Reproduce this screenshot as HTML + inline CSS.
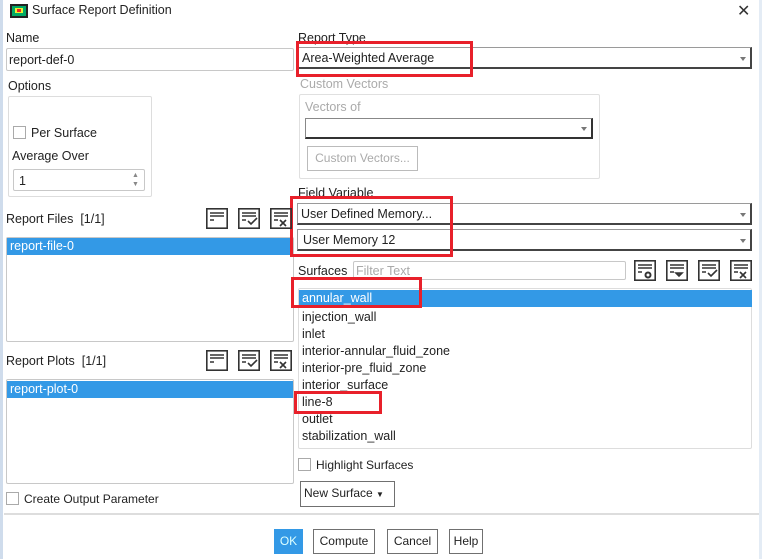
<!DOCTYPE html>
<html><head><meta charset="utf-8"><style>
*{box-sizing:border-box;margin:0;padding:0}
body{width:762px;height:559px;background:#fff;position:relative;overflow:hidden;font-family:"Liberation Sans",sans-serif;font-size:12.5px;color:#222}
.a{position:absolute;white-space:nowrap}
.inp{position:absolute;border:1px solid #c8c8c8;background:#fff;border-radius:2px}
.dd{position:absolute;border:1px solid #9a9a9a;border-right:2px solid #444;border-bottom:2px solid #444;background:#fff}
.dd:after{content:"";position:absolute;right:4px;top:50%;border:3px solid transparent;border-top:4px solid #777;margin-top:-1px}
.red{position:absolute;border:3px solid #e8202a}
.cb{position:absolute;width:13px;height:13px;border:1px solid #aaa;background:#fff}
.sel{position:absolute;background:#3399e6;color:#fff;padding-left:3px;line-height:17px}
.btn{position:absolute;border:1px solid #707070;background:#fff;text-align:center;line-height:22px;font-size:12px}
.g{color:#aaa}
</style></head><body>
<div class="a" style="left:0;top:0;width:3px;height:559px;background:#cfdcec"></div>
<div class="a" style="left:759px;top:0;width:3px;height:559px;background:#e4ecf5"></div>
<svg class="a" style="left:10px;top:4px" width="18" height="14"><rect width="18" height="14" fill="#222"/><rect x="2" y="2" width="14" height="10" fill="#0a6"/><rect x="5" y="4" width="8" height="5" fill="#ee3"/><rect x="7" y="5" width="4" height="3" fill="#e22"/></svg>
<div class="a" style="left:32px;top:3px;font-size:12.5px">Surface Report Definition</div>
<div class="a" style="left:737px;top:1px;font-size:16px;color:#333">✕</div>

<div class="a" style="left:6px;top:31px">Name</div>
<div class="inp" style="left:6px;top:48px;width:288px;height:23px"><span class="a" style="left:2px;top:4px">report-def-0</span></div>
<div class="a" style="left:8px;top:79px">Options</div>
<div class="inp" style="left:8px;top:96px;width:144px;height:101px;border-color:#ddd"></div>
<div class="cb" style="left:13px;top:126px"></div>
<div class="a" style="left:31px;top:126px">Per Surface</div>
<div class="a" style="left:12px;top:149px">Average Over</div>
<div class="inp" style="left:13px;top:169px;width:132px;height:22px"><span class="a" style="left:5px;top:4px">1</span><span class="a" style="left:118px;top:1px;font-size:7px;color:#888;line-height:9px">▲<br>▼</span></div>

<div class="a" style="left:6px;top:212px">Report Files &nbsp;[1/1]</div>
<div class="inp" style="left:6px;top:237px;width:288px;height:105px"></div>
<div class="sel" style="left:7px;top:238px;width:286px">report-file-0</div>
<div class="a" style="left:6px;top:354px">Report Plots &nbsp;[1/1]</div>
<div class="inp" style="left:6px;top:379px;width:288px;height:105px"></div>
<div class="sel" style="left:7px;top:381px;width:286px">report-plot-0</div>
<div class="cb" style="left:6px;top:492px"></div>
<div class="a" style="left:24px;top:492px;font-size:12px">Create Output Parameter</div>

<div class="a" style="left:298px;top:31px">Report Type</div>
<div class="dd" style="left:297px;top:47px;width:455px;height:22px"><span class="a" style="left:4px;top:3px">Area-Weighted Average</span></div>
<div class="red" style="left:296px;top:41px;width:177px;height:36px"></div>
<div class="a g" style="left:300px;top:77px">Custom Vectors</div>
<div class="inp" style="left:299px;top:94px;width:301px;height:85px;border-color:#e0e0e0"></div>
<div class="a g" style="left:305px;top:100px">Vectors of</div>
<div class="dd" style="left:305px;top:118px;width:288px;height:21px;border-color:#888 #333 #333 #888"></div>
<div class="btn g" style="left:307px;top:146px;width:111px;height:25px;border-color:#bbb">Custom Vectors...</div>

<div class="a" style="left:298px;top:186px">Field Variable</div>
<div class="dd" style="left:297px;top:203px;width:455px;height:22px"><span class="a" style="left:3px;top:3px">User Defined Memory...</span></div>
<div class="dd" style="left:297px;top:229px;width:455px;height:22px"><span class="a" style="left:5px;top:3px">User Memory 12</span></div>
<div class="red" style="left:290px;top:196px;width:163px;height:61px"></div>

<div class="a" style="left:298px;top:264px">Surfaces</div>
<div class="inp" style="left:353px;top:261px;width:273px;height:19px"><span class="a g" style="left:2px;top:2px">Filter Text</span></div>
<svg class="a" style="left:206px;top:208px" width="86" height="22"><g fill="none" stroke="#333" stroke-width="1.6"><rect x="0.8" y="0.8" width="20.4" height="19.4"/><path d="M4 5h14M4 8h14M4 12h4"/><rect x="32.8" y="0.8" width="20.4" height="19.4"/><path d="M36 5h14M36 8h14M36 12h4M42 13l3 3 6-6"/><rect x="64.8" y="0.8" width="20.4" height="19.4"/><path d="M68 5h14M68 8h14M68 12h4M74 12l6 6M80 12l-6 6"/></g></svg>
<svg class="a" style="left:206px;top:350px" width="86" height="22"><g fill="none" stroke="#333" stroke-width="1.6"><rect x="0.8" y="0.8" width="20.4" height="19.4"/><path d="M4 5h14M4 8h14M4 12h4"/><rect x="32.8" y="0.8" width="20.4" height="19.4"/><path d="M36 5h14M36 8h14M36 12h4M42 13l3 3 6-6"/><rect x="64.8" y="0.8" width="20.4" height="19.4"/><path d="M68 5h14M68 8h14M68 12h4M74 12l6 6M80 12l-6 6"/></g></svg>
<svg class="a" style="left:634px;top:260px" width="120" height="22"><g fill="none" stroke="#333" stroke-width="1.6"><rect x="0.8" y="0.8" width="20.4" height="19.4"/><path d="M4 5h14M4 8h14M4 12h4"/><circle cx="14" cy="15" r="2.5" stroke-width="2"/><rect x="32.8" y="0.8" width="20.4" height="19.4"/><path d="M36 5h14M36 8h14M36 12h4"/><path d="M42 13h6l-3 3z" fill="#555"/><rect x="64.8" y="0.8" width="20.4" height="19.4"/><path d="M68 5h14M68 8h14M68 12h4M74 13l3 3 6-6"/><rect x="96.8" y="0.8" width="20.4" height="19.4"/><path d="M100 5h14M100 8h14M100 12h4M106 12l6 6M112 12l-6 6"/></g></svg>
<div class="inp" style="left:298px;top:288px;width:454px;height:161px;border-color:#ddd"></div>
<div class="sel" style="left:299px;top:290px;width:453px">annular_wall</div>
<div class="a" style="left:302px;top:309px;line-height:17px">injection_wall<br>inlet<br>interior-annular_fluid_zone<br>interior-pre_fluid_zone<br>interior_surface<br>line-8<br>outlet<br>stabilization_wall</div>
<div class="red" style="left:291px;top:277px;width:131px;height:31px"></div>
<div class="red" style="left:294px;top:391px;width:88px;height:23px"></div>
<div class="cb" style="left:298px;top:458px"></div>
<div class="a" style="left:316px;top:458px;font-size:12px">Highlight Surfaces</div>
<div class="btn" style="left:300px;top:481px;width:95px;height:26px;text-align:left;padding-left:3px">New Surface <span style="font-size:8px">▼</span></div>
<div class="a" style="left:4px;top:513px;width:755px;height:2px;background:#ddd"></div>
<div class="btn" style="left:274px;top:529px;width:29px;height:25px;background:#3399e6;color:#dff;border-color:#3399e6">OK</div>
<div class="btn" style="left:313px;top:529px;width:62px;height:25px">Compute</div>
<div class="btn" style="left:387px;top:529px;width:51px;height:25px">Cancel</div>
<div class="btn" style="left:449px;top:529px;width:34px;height:25px">Help</div>
</body></html>
